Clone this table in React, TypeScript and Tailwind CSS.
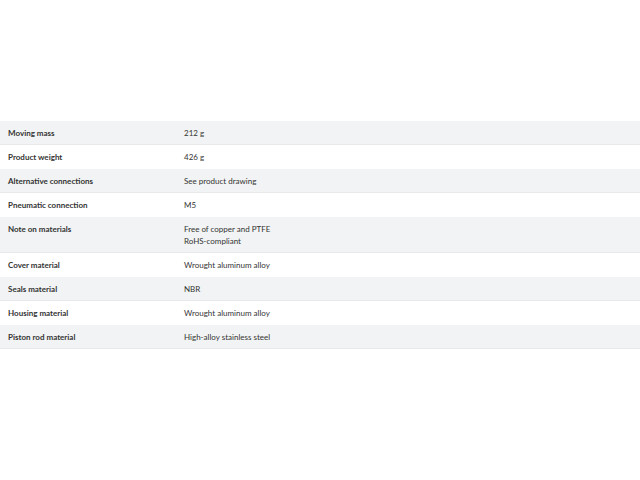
const rows: { label: string; value: string[] }[] = [
  { label: 'Moving mass', value: ['212 g'] },
  { label: 'Product weight', value: ['426 g'] },
  { label: 'Alternative connections', value: ['See product drawing'] },
  { label: 'Pneumatic connection', value: ['M5'] },
  { label: 'Note on materials', value: ['Free of copper and PTFE', 'RoHS-compliant'] },
  { label: 'Cover material', value: ['Wrought aluminum alloy'] },
  { label: 'Seals material', value: ['NBR'] },
  { label: 'Housing material', value: ['Wrought aluminum alloy'] },
  { label: 'Piston rod material', value: ['High-alloy stainless steel'] },
];

export default function App() {
  return (
    <div className="w-[640px] h-[480px] bg-white pt-[121px] text-[#333] font-['Lato',sans-serif] text-[8px] leading-[12px]">
      <table className="w-full border-collapse">
        <tbody>
          {rows.map((r, i) => {
            const shade = i % 2 === 0 ? 'bg-[#f2f3f4] shadow-[inset_0_-1px_0_#e8e9eb]' : 'bg-white';
            return (
              <tr key={r.label}>
                <td className={`w-[184px] pl-2 py-[6px] align-top font-bold ${shade}`}>{r.label}</td>
                <td className={`py-[6px] align-top ${shade}`}>
                  {r.value.map((v) => (
                    <div key={v}>{v}</div>
                  ))}
                </td>
              </tr>
            );
          })}
        </tbody>
      </table>
    </div>
  );
}
